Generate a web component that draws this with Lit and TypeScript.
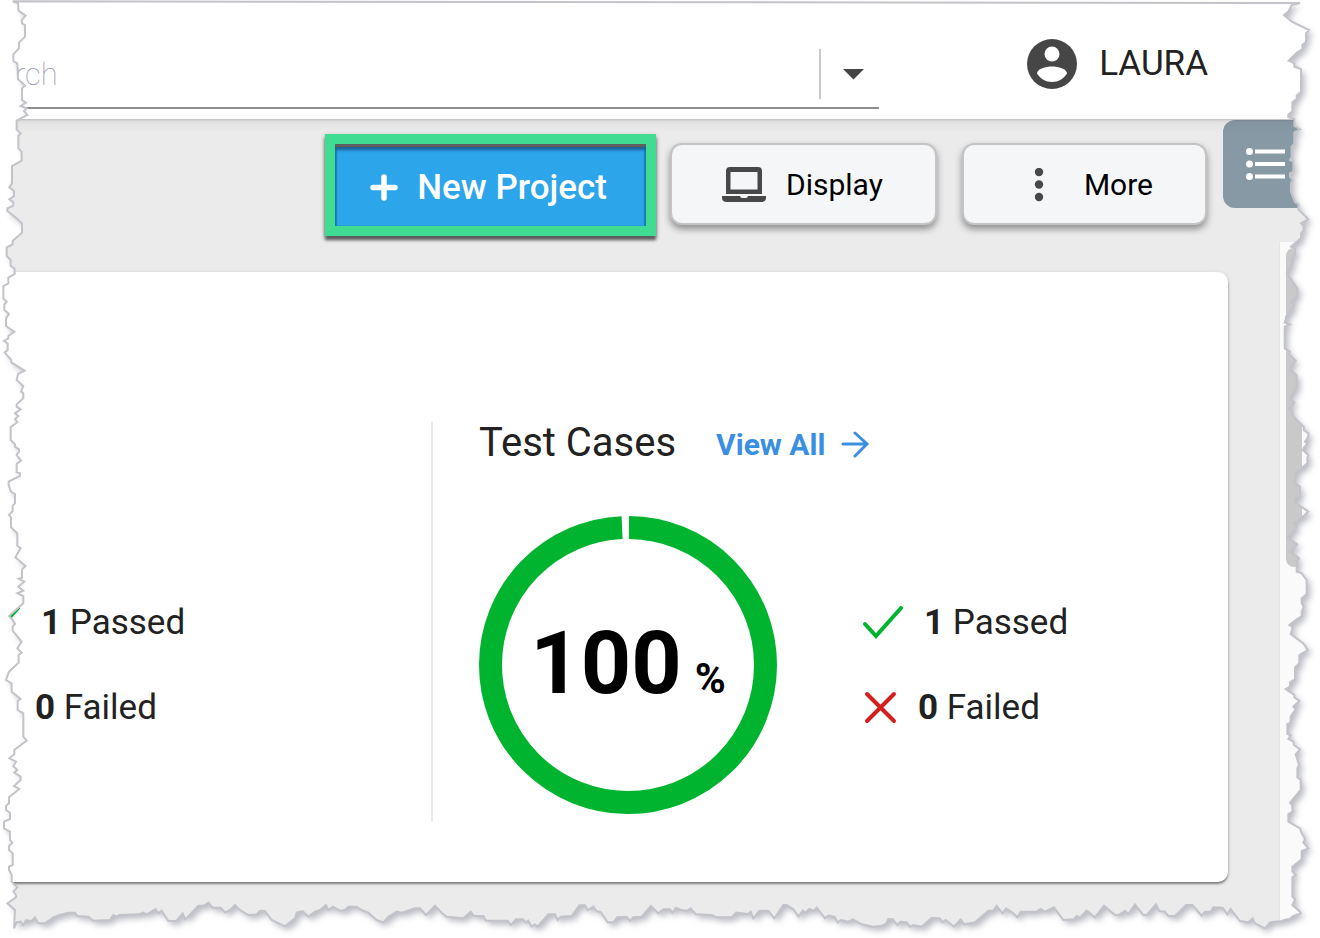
import { LitElement, html, css, svg } from "lit";
import { customElement, property } from "lit/decorators.js";

/* Outline of the torn paper, in a 3960 x 2814 grid. Each run is a list of
   x,y pairs relative to the run's own origin. */
type Run = { dx: number; dy: number; pts: string };

const LEFT: Run[] = [
  { dx: 0, dy: 0, pts: "38,4 54,10 56,32 77,47 65,60 66,70 75,75 75,110 57,128 57,145 40,163 40,183 52,190 54,238 63,245 75,257 66,265 66,300 78,308 62,318 80,325 72,333 82,345 50,362 50,388 62,400 55,408 55,445 65,455 65,482 36,498 36,550 28,562 42,573 42,588 28,598 40,607 40,617 22,625 22,633 48,653 66,670 66,698 38,723 38,733 20,742 20,768 32,780 32,797 44,806 44,822 25,833 25,850 10,858 10,895 20,905 13,914 13,930" },
  { dx: 0, dy: 930, pts: "27,12 18,25 18,48 43,65 25,78 25,85 12,93 23,100 23,120 14,128 34,150 34,157 74,182 54,192 50,210 70,228 63,245 70,250 70,265 50,283 50,290 62,298 45,310 55,318 45,327 52,336 32,352 32,390 45,403 45,410 57,418 57,425 50,435 63,452 50,462 50,487 60,490 60,498 26,515 26,525 33,545 45,552 45,580 38,587 38,603 27,615 33,622 33,652 52,670 52,707 62,715 46,742 77,768 66,778 66,803 56,806 73,815 55,830 70,842 52,850 70,858 70,880 27,918 38,930" },
  { dx: 0, dy: 1860, pts: "45,12 38,20 38,32 65,65 52,85 65,98 56,105 56,128 27,155 18,180 35,190 35,215 62,237 53,243 53,270 70,280 70,350 80,362 43,390 43,403 28,415 48,425 40,438 52,450 43,458 62,470 62,480 42,498 58,507 27,532 27,550 18,558 18,570 30,578 30,597 12,605 12,625 30,635 30,660 37,668 27,678 27,690 38,700 38,735 27,740 27,750 35,765 35,785 52,802 40,815 48,825 48,832 22,850 45,870 42,925" },
];

const BOTTOM: Run[] = [
  { dx: 0, dy: 2580, pts: "50,187 62,185 70,195 78,180 95,183 105,172 115,190 135,190 160,172 178,165 205,158 225,158 232,168 265,170 280,182 330,180 340,165 350,170 358,165 415,163 430,158 440,163 467,147 475,160 485,152 505,183 530,182 548,160 556,178 595,137 612,137 625,128 638,143 662,143 675,157 690,150 705,135 720,150 745,165 770,163 780,152 795,153 815,180 832,188 855,199 885,175 890,158 908,153 925,170 945,155 960,150 978,135 985,150 998,140 1020,152 1035,150 1045,140 1070,140 1085,150 1105,158 1130,180 1150,187 1165,170 1190,155 1205,158 1245,145 1260,145 1278,165 1305,137" },
  { dx: 1320, dy: 2580, pts: "5,158 20,170 70,175 92,155 102,168 130,168 138,182 203,182 213,195 228,178 248,178 258,187 265,182 275,200 285,193 292,200 325,163 345,163 353,180 362,170 395,168 418,136 435,136 443,150 460,140 470,153 483,157 503,187 520,187 532,172 560,170 570,183 580,172 605,170 633,138 655,160 670,148 690,148 697,158 708,143 722,150 742,152 752,145 768,163 815,165 830,172 875,172 888,158 925,162 932,155 940,175 957,153 985,152 1003,175 1030,135 1040,135 1060,148 1076,170 1088,152 1097,157 1108,147 1122,152 1130,143 1155,175 1165,167 1183,170 1193,187 1203,180 1225,185 1238,178 1265,193 1300,200 1318,198" },
  { dx: 2640, dy: 2580, pts: "5,197 18,192 25,177 38,178 52,195 62,185 80,187 90,200 100,195 125,200 155,173 180,175 187,187 197,180 222,200 242,178 253,193 285,187 325,152 340,152 350,138 368,160 378,145 400,160 412,172 422,155 470,155 482,147 495,155 522,142 550,180 582,178 590,168 600,172 620,152 645,172 672,137 705,165 715,165 735,152 745,162 765,133 790,165 800,165 828,133 838,153 855,155 865,168 885,168 918,135 937,135 965,167 975,155 992,155 1000,142 1028,143 1042,163 1052,147 1080,183 1105,187 1118,175 1125,190 1155,205 1170,187 1205,183 1220,178 1228,178 1240,168 1262,160" },
];

const RIGHT: Run[] = [
  { dx: 3600, dy: 0, pts: "300,9 275,15 265,35 252,45 275,65 327,90 318,100 318,125 307,135 307,147 290,158 266,182 283,190 283,200 303,207 303,275 290,287 290,297 277,307 277,335 265,343 265,352 283,357 283,378 300,388 283,397 283,430 275,440 275,470 270,480 280,485 280,515 270,520 270,530 278,540 273,550 273,575 285,607 295,612 295,628 325,658 303,670 311,678 311,690 303,700 303,715 273,740 285,747 285,765 275,775 275,795 260,820 292,865 292,885 273,907 283,912 268,938 258,950" },
  { dx: 3600, dy: 930, pts: "258,25 254,38 270,43 254,50 254,115 270,125 267,132 287,153 270,168 270,180 290,195 290,230 268,265 283,278 265,297 278,305 278,315 290,330 311,350 311,360 325,370 325,380 315,395 322,400 312,413 308,420 325,435 322,442 322,460 300,478 285,487 290,490 280,518 300,530 300,560 285,568 285,577 325,605 308,620 280,640 290,648 283,660 262,683 292,703 270,725 297,745 290,757 290,785 305,790 320,810 320,852 305,865 305,880 311,890 305,905 305,918 285,932" },
  { dx: 3600, dy: 1860, pts: "268,15 278,22 272,42 310,70 323,90 298,105 298,130 285,142 285,178 270,187 270,200 257,207 283,225 283,232 298,243 280,260 287,268 272,290 272,308 262,312 262,342 272,347 265,357 280,365 282,375 300,388 287,403 297,435 292,445 292,472 302,480 302,510 285,530 270,548 277,557 277,575 265,582 265,605 300,625 305,640 315,657 310,668 325,685 305,693 305,718 277,740 277,755 287,765 277,772 277,830 285,838 277,855 300,875" },
];

const toPoints = (runs: Run[]): string[] =>
  runs.flatMap((run) =>
    run.pts.split(" ").map((pair) => {
      const [x, y] = pair.split(",").map(Number);
      return `${x + run.dx} ${y + run.dy}`;
    })
  );

const PAPER =
  "M" + [...toPoints(LEFT), ...toPoints(BOTTOM), ...toPoints(RIGHT).reverse()].join("L") + "Z";
const OUTSIDE = `M-60-60H4020V2874H-60Z${PAPER}`;

@customElement("torn-edge")
export class TornEdge extends LitElement {
  static styles = css`
    :host {
      display: block;
      pointer-events: none;
    }
    .sheet {
      display: block;
      width: 100%;
      height: 100%;
    }
  `;

  render() {
    return html`<svg class="sheet" viewBox="0 0 3960 2814" preserveAspectRatio="none" aria-hidden="true">
      ${svg`
        <defs>
          <clipPath id="outside"><path d=${OUTSIDE} clip-rule="evenodd"></path></clipPath>
          <filter id="soft" x="-5%" y="-5%" width="110%" height="110%">
            <feGaussianBlur stdDeviation="9"></feGaussianBlur>
          </filter>
        </defs>
        <g clip-path="url(#outside)">
          <rect x="-60" y="-60" width="4080" height="2934" fill="#fff"></rect>
          <path d=${PAPER} fill="#babbc2" filter="url(#soft)" transform="translate(11 12)"></path>
        </g>
        <path d=${PAPER} fill="none" stroke="#c3c4c9" stroke-width="6"></path>
      `}
    </svg>`;
  }
}

@customElement("result-list")
export class ResultList extends LitElement {
  @property({ type: Number }) passed = 0;
  @property({ type: Number }) failed = 0;

  static styles = css`
    :host {
      display: block;
    }
    .list {
      display: grid;
      gap: 43px;
      margin: 0;
      padding: 0;
      list-style: none;
    }
    .row {
      display: flex;
      align-items: center;
      gap: 21px;
      font-size: 35px;
      line-height: 42px;
      color: #222;
      white-space: nowrap;
    }
    .icon {
      flex: none;
      display: block;
      fill: none;
      stroke-width: 4;
    }
    .pass {
      stroke: #00b42f;
    }
    .fail {
      stroke: #d41f1f;
      stroke-linecap: round;
    }
  `;

  render() {
    return html`<ul class="list">
      <li class="row">
        <svg class="icon pass" width="40" height="34" viewBox="0 0 40 34" aria-hidden="true">
          <path d="M2 18L13 30L38 2" stroke-linecap="round" stroke-linejoin="miter"></path>
        </svg>
        <span><b>${this.passed}</b> Passed</span>
      </li>
      <li class="row">
        <svg class="icon fail" width="34" height="34" viewBox="0 0 34 34" aria-hidden="true">
          <path d="M4 3L31 30M31 3L4 30"></path>
        </svg>
        <span><b>${this.failed}</b> Failed</span>
      </li>
    </ul>`;
  }
}

@customElement("app-root")
export class AppRoot extends LitElement {
  static styles = css`
    * {
      box-sizing: border-box;
    }
    :host {
      display: flex;
      flex-direction: column;
      position: relative;
      min-height: 100vh;
      overflow: hidden;
      background: #ebebeb;
      color: #222;
      font-family: Roboto, "Liberation Sans", sans-serif;
    }
    button {
      font: inherit;
      color: inherit;
      border: 0;
      background: none;
      padding: 0;
      cursor: pointer;
    }
    svg {
      display: block;
      flex: none;
    }
    .edge {
      position: absolute;
      inset: 0;
      z-index: 3;
    }

    .header {
      position: relative;
      z-index: 1;
      display: flex;
      align-items: flex-start;
      gap: 147px;
      height: 119px;
      padding-right: 112px;
      background: #fff;
      box-shadow: 0 1px 2px rgba(0, 0, 0, 0.16), 0 3px 12px rgba(0, 0, 0, 0.08);
    }
    .search {
      flex: 1;
      display: flex;
      align-items: center;
      height: 109px;
      padding-top: 40px;
      border-bottom: 2px solid #8f8f8f;
    }
    .field {
      flex: 1;
      min-width: 0;
      height: 50px;
      padding: 2px 15px 0;
      border: 0;
      border-right: 2px solid #c8c8c8;
      outline: 0;
      background: none;
      font: 100 31px/48px Roboto, "Liberation Sans", sans-serif;
      color: #222;
    }
    .field::placeholder {
      color: #9a98b2;
      opacity: 1;
    }
    .drop {
      display: grid;
      place-items: center;
      width: 58px;
      height: 50px;
      padding-left: 8px;
    }
    .user {
      display: flex;
      align-items: center;
      gap: 19px;
      height: 128px;
      font-size: 35px;
      line-height: 42px;
    }

    .toolbar {
      display: flex;
      align-items: flex-start;
      justify-content: flex-end;
      gap: 16px;
      height: 123px;
    }
    .actions {
      display: flex;
      align-items: flex-start;
      padding-top: 15px;
    }
    .frame {
      margin-right: 14px;
      border: 10px solid #3fdc91;
      background: #2ca5eb;
      box-shadow: 0 4px 3px #5c5c5c, 0 2px 5px rgba(0, 0, 0, 0.3);
    }
    .primary {
      display: flex;
      align-items: center;
      gap: 18px;
      height: 82px;
      padding: 6px 39px 0 34px;
      color: #fff;
      background: #2ca5eb;
      box-shadow: inset 0 3px 0 #5f5f5f, inset 0 6px 3px #1c5f96, inset 2px 0 1px #1f83c4,
        inset -2px 0 1px #1f83c4;
      font-size: 35px;
      font-weight: 500;
      line-height: 42px;
      white-space: nowrap;
    }
    .tool {
      display: flex;
      align-items: center;
      height: 82px;
      margin-top: 9px;
      padding-top: 2px;
      border: 2px solid #c4c4c4;
      border-radius: 12px;
      background: #f5f6f8;
      box-shadow: 0 4px 7px rgba(0, 0, 0, 0.4);
      color: #000;
      font-size: 30px;
      line-height: 36px;
    }
    .display {
      gap: 20px;
      margin-right: 25px;
      padding-left: 50px;
      padding-right: 52px;
    }
    .more {
      gap: 40px;
      padding-left: 70px;
      padding-right: 52px;
    }
    .tab {
      display: flex;
      align-items: center;
      width: 97px;
      height: 88px;
      margin-top: 1px;
      padding-left: 22px;
      border-radius: 12px 0 0 12px;
      background: #8899a6;
    }

    .body {
      flex: 1;
      display: flex;
    }
    .card {
      flex: 1;
      display: flex;
      align-self: stretch;
      margin: 30px 51px 56px 0;
      padding: 150px 0 60px;
      border-radius: 0 10px 10px 0;
      background: #fff;
      box-shadow: 0 2px 2px rgba(0, 0, 0, 0.4), 0 1px 5px rgba(0, 0, 0, 0.14);
    }
    .previous {
      flex: none;
      display: flex;
      align-items: flex-end;
      width: 433px;
      min-height: 400px;
      padding-bottom: 93px;
      border-right: 2px solid #ebebeb;
    }
    .cut {
      margin-left: -20px;
    }
    .cases {
      flex: 1;
      display: flex;
      flex-direction: column;
      gap: 52px;
      padding-left: 46px;
    }
    .heading {
      display: flex;
      align-items: center;
      gap: 40px;
      height: 42px;
    }
    .title {
      margin: 0;
      font-size: 40px;
      font-weight: 400;
      line-height: 42px;
    }
    .link {
      display: flex;
      align-items: center;
      gap: 16px;
      padding-top: 4px;
      color: #3b8fe0;
      font-size: 30px;
      font-weight: 700;
      line-height: 36px;
      text-decoration: none;
    }
    .summary {
      display: flex;
      align-items: center;
      gap: 86px;
    }
    .donut {
      display: grid;
      place-items: center;
      width: 298px;
      height: 298px;
    }
    .donut > * {
      grid-area: 1 / 1;
    }
    .score {
      display: flex;
      align-items: baseline;
      gap: 13px;
      padding-top: 12px;
      color: #000;
      font-size: 88px;
      font-weight: 700;
      line-height: 88px;
    }
    .unit {
      font-size: 42px;
    }
    .scroll {
      width: 41px;
      padding: 6px 0 0 6px;
      border-left: 1px solid #e4e4e4;
      background: #fafafa;
    }
    .thumb {
      width: 16px;
      height: 319px;
      border-radius: 8px;
      background: #c9c9c9;
    }
  `;

  render() {
    return html`
      <header class="header">
        <div class="search">
          <input class="field" type="text" aria-label="Search" placeholder="rch" />
          <button class="drop" aria-label="Search options">
            <svg width="22" height="12" viewBox="0 0 22 12"><path d="M0 1H21L10.500 11.500Z" fill="#444"></path></svg>
          </button>
        </div>
        <button class="user">
          <svg width="54" height="50" viewBox="0 0 54 50" aria-hidden="true">
            <circle cx="26" cy="25" r="25" fill="#464646"></circle>
            <circle cx="26" cy="15" r="7.500" fill="#fff"></circle>
            <path d="M11 34.500C11 30 20 27.500 26 27.500S41 30 41 34.500C37.800 39.500 32.300 43 26 43S14.200 39.500 11 34.500Z" fill="#fff"></path>
          </svg>
          <span>LAURA</span>
        </button>
      </header>

      <div class="toolbar">
        <div class="actions">
          <div class="frame">
            <button class="primary">
              <svg width="30" height="28" viewBox="0 0 30 28" aria-hidden="true">
                <path d="M15 3V24M4 13.500H26" stroke="#fff" stroke-width="5.500" stroke-linecap="round"></path>
              </svg>
              <span>New Project</span>
            </button>
          </div>
          <button class="tool display">
            <svg width="44" height="36" viewBox="0 0 44 36" aria-hidden="true">
              <path fill="#484848" fill-rule="evenodd" d="M8 0H36Q40 0 40 4V27H4V4Q4 0 8 0ZM8.500 5V22.500H35.500V5Z"></path>
              <path fill="#484848" d="M0 29H18Q18.500 31 20 31H24Q25.500 31 26 29H44V31Q44 35 39 35H5Q0 35 0 31Z"></path>
            </svg>
            <span>Display</span>
          </button>
          <button class="tool more">
            <svg width="10" height="34" viewBox="0 0 10 34" aria-hidden="true" fill="#484848">
              <circle cx="5" cy="4" r="4.200"></circle>
              <circle cx="5" cy="16.500" r="4.200"></circle>
              <circle cx="5" cy="29" r="4.200"></circle>
            </svg>
            <span>More</span>
          </button>
        </div>
        <button class="tab" aria-label="List panel">
          <svg width="40" height="34" viewBox="0 0 40 34" fill="#fff">
            <circle cx="4.500" cy="4.500" r="3.500"></circle>
            <circle cx="4.500" cy="17" r="3.500"></circle>
            <circle cx="4.500" cy="29.500" r="3.500"></circle>
            <path d="M10 2.500H40V6.500H10ZM10 15H40V19H10ZM10 27.500H40V31.500H10Z"></path>
          </svg>
        </button>
      </div>

      <main class="body">
        <section class="card">
          <div class="previous">
            <result-list class="cut" passed="1" failed="0"></result-list>
          </div>
          <div class="cases">
            <div class="heading">
              <h2 class="title">Test Cases</h2>
              <a class="link" href="#cases">
                <span>View All</span>
                <svg width="28" height="28" viewBox="0 0 28 28" fill="none" stroke="#3b8fe0" stroke-width="3" aria-hidden="true">
                  <path d="M2 13H26M14 2L26 13L14 25" stroke-linecap="round"></path>
                </svg>
              </a>
            </div>
            <div class="summary">
              <div class="donut">
                <svg width="298" height="298" viewBox="0 0 298 298" aria-hidden="true">
                  <circle cx="149" cy="149" r="137.500" fill="none" stroke="#00b42f" stroke-width="23"
                    pathLength="1000" stroke-dasharray="992 8" transform="rotate(-89.600 149 149)"></circle>
                </svg>
                <div class="score"><span>100</span><span class="unit">%</span></div>
              </div>
              <result-list passed="1" failed="0"></result-list>
            </div>
          </div>
        </section>
        <div class="scroll"><div class="thumb"></div></div>
      </main>

      <torn-edge class="edge"></torn-edge>
    `;
  }
}
